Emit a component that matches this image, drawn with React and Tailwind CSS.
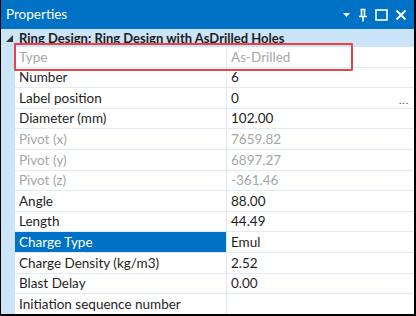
import React from 'react';

const rows = [
  { name: 'Type', value: 'As-Drilled', disabled: true },
  { name: 'Number', value: '6' },
  { name: 'Label position', value: '0', more: true },
  { name: 'Diameter (mm)', value: '102.00' },
  { name: 'Pivot (x)', value: '7659.82', disabled: true },
  { name: 'Pivot (y)', value: '6897.27', disabled: true },
  { name: 'Pivot (z)', value: '-361.46', disabled: true },
  { name: 'Angle', value: '88.00' },
  { name: 'Length', value: '44.49' },
  { name: 'Charge Type', value: 'Emul', selected: true },
  { name: 'Charge Density (kg/m3)', value: '2.52' },
  { name: 'Blast Delay', value: '0.00' },
  { name: 'Initiation sequence number', value: '' },
];

function TitleIcons() {
  return (
    <div className="flex items-center gap-[7px] mr-[7px] text-white">
      <svg width="9" height="6" viewBox="0 0 9 6">
        <path d="M1 1h7L4.5 5z" fill="white" />
      </svg>
      <svg width="10" height="14" viewBox="0 0 10 14">
        <path d="M2.5 1.5h5M3.5 1.5v7M6.5 1.5v7M1 8.5h8M5 8.5v5" stroke="white" strokeWidth="1.6" fill="none" />
      </svg>
      <svg width="13" height="12" viewBox="0 0 13 12">
        <rect x="1" y="1" width="11" height="10" stroke="white" strokeWidth="1.6" fill="none" />
      </svg>
      <svg width="12" height="12" viewBox="0 0 12 12">
        <path d="M1.5 1.5l9 9M10.5 1.5l-9 9" stroke="white" strokeWidth="1.8" />
      </svg>
    </div>
  );
}

export default function App() {
  return (
    <div
      className="relative w-[416px] h-[316px] overflow-hidden bg-white border-l border-r-2 border-b-2 border-black"
      style={{ fontFamily: 'Lato, "Noto Sans", sans-serif' }}
    >
      {/* title bar */}
      <div className="h-[29px] bg-[#0072c6] flex items-center justify-between">
        <span className="pl-[5px] text-white text-[13.5px] leading-none">Properties</span>
        <TitleIcons />
      </div>

      {/* category */}
      <div className="h-[18px] bg-[#cce4f7] flex items-center">
        <svg width="7" height="7" viewBox="0 0 7 7" className="ml-[5px] mr-[6px]">
          <path d="M7 0v7H0z" fill="#333" />
        </svg>
        <span className="text-[13px] font-bold text-[#1e1e1e] leading-none">
          Ring Design: Ring Design with AsDrilled Holes
        </span>
      </div>

      {/* grid */}
      <div className="flex">
        <div className="w-[14px] bg-[#cce4f7] shrink-0" />
        <div className="flex-1">
          {rows.map((r) => (
            <div key={r.name} className="h-[20.6px] flex border-b border-[#dfecf8] text-[13.5px]">
              <div
                className={
                  'w-[212px] shrink-0 flex items-center pl-[4px] border-r border-[#dfecf8] ' +
                  (r.selected ? 'bg-[#0072c6] text-white' : r.disabled ? 'text-[#a6a6a6]' : 'text-[#1e1e1e]')
                }
              >
                {r.name}
              </div>
              <div
                className={
                  'flex-1 flex items-center justify-between pl-[4px] pr-[5px] ' +
                  (r.disabled ? 'text-[#a6a6a6]' : 'text-[#1e1e1e]')
                }
              >
                <span>{r.value}</span>
                {r.more && <span className="text-[10px] text-[#333] tracking-[1px] mt-[6px]">...</span>}
              </div>
            </div>
          ))}
        </div>
      </div>

      {/* annotation box */}
      <div className="absolute left-[13px] top-[43px] w-[339px] h-[28px] border-2 border-[#e8434b] rounded-[1px]" />
    </div>
  );
}
